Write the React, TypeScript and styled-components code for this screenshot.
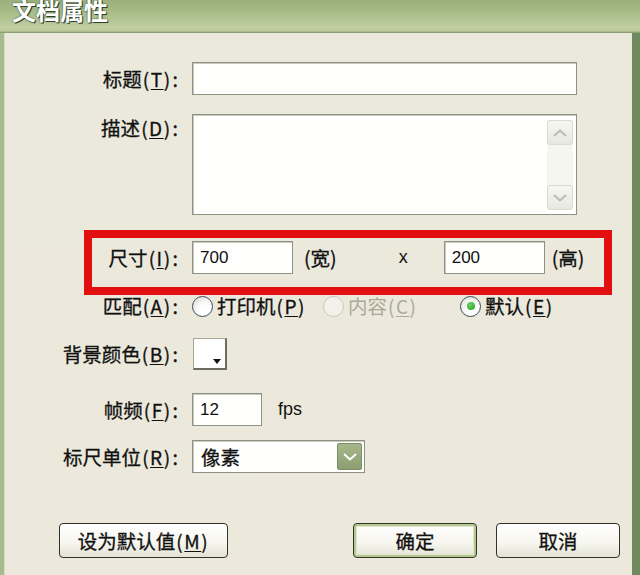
import React from "react";
import styled, { createGlobalStyle, css } from "styled-components";

const Global = createGlobalStyle`
  html, body { margin: 0; padding: 0; background: #ece9d8; }
  body { width: 640px; height: 575px; overflow: hidden; }
  *, *::before, *::after { box-sizing: border-box; }
`;

const CJK = `"Noto Sans CJK SC", "Noto Sans", sans-serif`;
const LATIN = `"Liberation Sans", "Noto Sans CJK SC", sans-serif`;

const Window = styled.div`
  width: 640px;
  height: 575px;
  display: flex;
  flex-direction: column;
  font-family: ${CJK};
  color: #111;
`;

const TitleBar = styled.div`
  height: 33px;
  flex: none;
  display: flex;
  align-items: flex-start;
  padding-left: 12px;
  background: linear-gradient(180deg, #9aaf7c 0%, #a9bd8a 40%, #c4d0a2 85%, #b9c79a 94%, #7d9264 100%);
  overflow: hidden;
`;

const TitleText = styled.div`
  margin-top: -6px;
  font-size: 24px;
  font-weight: 700;
  line-height: 32px;
  color: #ffffff;
  text-shadow: 1px 1px 0 #30402a, 0 0 2px #3a4a30;
`;

const Body = styled.div`
  flex: 1;
  display: flex;
  flex-direction: column;
  background: linear-gradient(180deg, #ebe9dc 0%, #ece9dc 100%);
  border-left: 4px solid #a8bb8c;
  border-right: 8px solid #6f8a5c;
  box-shadow: inset 1px 0 0 #d6dcc4;
  padding-top: 29px;
`;

const Row = styled.div<{ $top?: number; $align?: string }>`
  display: grid;
  grid-template-columns: 174px auto;
  column-gap: 14px;
  align-items: ${(p) => p.$align || "center"};
  margin-top: ${(p) => p.$top ?? 0}px;
  position: relative;
`;

/* the dialog's system font is a little heavier than Noto's regular cut */
const heavier = css`
  -webkit-text-stroke: 0.3px currentColor;
`;

const Label = styled.label`
  text-align: right;
  font-size: 19.5px;
  line-height: 24px;
  white-space: nowrap;
  color: #111;
  ${heavier};
`;

/* access-key hint such as (T), laid out half-width like the dialog's system font */
const Key = styled.span`
  font-size: 19px;
  letter-spacing: 1.5px;
  margin-left: 1px;
  u { text-decoration: underline; text-underline-offset: 2px; }
`;

const Colon = styled.span`
  margin-left: 1px;
`;

const fieldBorder = css`
  border: 1px solid #8d9282;
  box-shadow: inset 1px 1px 0 #c9c9c0;
  background: #fffffe;
`;

const TextField = styled.div<{ $w: number; $h?: number }>`
  ${fieldBorder};
  width: ${(p) => p.$w}px;
  height: ${(p) => p.$h ?? 33}px;
  display: flex;
  align-items: center;
  padding-left: 7px;
  font-family: ${LATIN};
  font-size: 17px;
  color: #111;
`;

const TextArea = styled.div`
  ${fieldBorder};
  width: 385px;
  height: 101px;
  display: flex;
  justify-content: flex-end;
  padding: 5px 3px 4px 0;
`;

const ScrollBar = styled.div`
  width: 26px;
  display: flex;
  flex-direction: column;
  justify-content: space-between;
  background: #f6f6f1;
  border-radius: 2px;
`;

const ScrollBtn = styled.div`
  height: 25px;
  border: 1px solid #d9dccf;
  border-radius: 3px;
  background: linear-gradient(180deg, #f7f7f2, #e7e8de);
  display: flex;
  align-items: center;
  justify-content: center;
`;

const SizeRow = styled(Row)`
  &::after {
    content: "";
    position: absolute;
    left: 80px;
    top: -11px;
    width: 528px;
    height: 65px;
    border: 8px solid #e10f0f;
    pointer-events: none;
  }
`;

const Inline = styled.div`
  display: flex;
  align-items: center;
`;

const Unit = styled.span<{ $ml: number }>`
  margin-left: ${(p) => p.$ml}px;
  font-size: 19.5px;
  line-height: 24px;
  ${heavier};
`;

const Times = styled.span<{ $ml: number; $mr: number }>`
  margin-left: ${(p) => p.$ml}px;
  margin-right: ${(p) => p.$mr}px;
  font-family: ${LATIN};
  font-size: 18px;
`;

const Option = styled.div<{ $w?: number; $disabled?: boolean }>`
  display: flex;
  align-items: center;
  width: ${(p) => (p.$w ? `${p.$w}px` : "auto")};
  font-size: 19.5px;
  line-height: 24px;
  color: ${(p) => (p.$disabled ? "#aca899" : "#111")};
  white-space: nowrap;
  ${(p) => !p.$disabled && heavier};
`;

const Radio = styled.span<{ $on?: boolean; $disabled?: boolean }>`
  width: 21px;
  height: 21px;
  border-radius: 50%;
  margin-right: 4px;
  flex: none;
  border: 1px solid ${(p) => (p.$disabled ? "#cac8bb" : "#3f4a5a")};
  background: ${(p) =>
    p.$disabled ? "#f2f1ea" : "radial-gradient(circle at 65% 70%, #ffffff 30%, #dcdcd2 100%)"};
  display: flex;
  align-items: center;
  justify-content: center;
  &::after {
    content: "";
    display: ${(p) => (p.$on ? "block" : "none")};
    width: 8px;
    height: 8px;
    border-radius: 50%;
    background: radial-gradient(circle at 40% 35%, #6fd06a, #21a121);
  }
`;

const Swatch = styled.div`
  width: 34px;
  height: 32px;
  margin-left: 1px;
  background: #fff;
  border-top: 1px solid #a7a69a;
  border-left: 1px solid #a7a69a;
  border-right: 2px solid #6d6c62;
  border-bottom: 2px solid #6d6c62;
  position: relative;
  &::after {
    content: "";
    position: absolute;
    right: 4px;
    bottom: 4px;
    border-left: 4px solid transparent;
    border-right: 4px solid transparent;
    border-top: 5px solid #111;
  }
`;

const Fps = styled.span`
  margin-left: 16px;
  font-family: ${LATIN};
  font-size: 18px;
`;

const Select = styled.div`
  ${fieldBorder};
  width: 173px;
  height: 33px;
  display: flex;
  align-items: center;
  justify-content: space-between;
  padding: 2px 2px 2px 8px;
  font-size: 19.5px;
  ${heavier};
`;

const DropBtn = styled.div`
  width: 25px;
  height: 27px;
  border-radius: 2px;
  border: 1px solid #7c8e66;
  background: linear-gradient(180deg, #a7b78b, #8c9f70);
  display: flex;
  align-items: center;
  justify-content: center;
`;

const Buttons = styled.div`
  display: flex;
  align-items: center;
  margin-top: 50px;
  padding-left: 55px;
`;

const Button = styled.button<{ $w: number; $ml?: number; $default?: boolean }>`
  width: ${(p) => p.$w}px;
  height: 35px;
  margin-left: ${(p) => p.$ml ?? 0}px;
  border: 1px solid #2f3328;
  border-radius: 4px;
  background: linear-gradient(180deg, #ffffff 0%, #f6f5ee 60%, #e4e2d4 100%);
  font-family: ${CJK};
  font-size: 19.5px;
  color: #111;
  padding: 0;
  ${heavier};
  ${(p) =>
    p.$default &&
    css`
      box-shadow: inset 0 0 0 2px #b4c98f, inset 0 0 0 3px #dfe8c8;
    `}
`;

const Chevron = ({ up, color }: { up?: boolean; color: string }) => (
  <svg width="16" height="10" viewBox="0 0 16 10">
    <path
      d={up ? "M2 8 L8 2.5 L14 8" : "M2 2 L8 7.5 L14 2"}
      fill="none"
      stroke={color}
      strokeWidth="2"
    />
  </svg>
);

const M = ({ k }: { k: string }) => (
  <Key>
    (<u>{k}</u>)
  </Key>
);

export default function App() {
  return (
    <Window>
      <Global />
      <TitleBar>
        <TitleText>文档属性</TitleText>
      </TitleBar>
      <Body>
        <Row>
          <Label>
            标题<M k="T" /><Colon>:</Colon>
          </Label>
          <TextField $w={385} />
        </Row>

        <Row $top={19} $align="start">
          <Label style={{ marginTop: 2 }}>
            描述<M k="D" /><Colon>:</Colon>
          </Label>
          <TextArea>
            <ScrollBar>
              <ScrollBtn>
                <Chevron up color="#b9bcb0" />
              </ScrollBtn>
              <ScrollBtn>
                <Chevron color="#b9bcb0" />
              </ScrollBtn>
            </ScrollBar>
          </TextArea>
        </Row>

        <SizeRow $top={26}>
          <Label>
            尺寸<M k="I" /><Colon>:</Colon>
          </Label>
          <Inline>
            <TextField $w={101}>700</TextField>
            <Unit $ml={11}>(宽)</Unit>
            <Times $ml={62} $mr={36}>x</Times>
            <TextField $w={101}>200</TextField>
            <Unit $ml={7}>(高)</Unit>
          </Inline>
        </SizeRow>

        <Row $top={20}>
          <Label>
            匹配<M k="A" /><Colon>:</Colon>
          </Label>
          <Inline>
            <Option $w={131}>
              <Radio />
              打印机<M k="P" />
            </Option>
            <Option $w={137} $disabled>
              <Radio $disabled />
              内容<M k="C" />
            </Option>
            <Option>
              <Radio $on />
              默认<M k="E" />
            </Option>
          </Inline>
        </Row>

        <Row $top={20}>
          <Label>
            背景颜色<M k="B" /><Colon>:</Colon>
          </Label>
          <Swatch />
        </Row>

        <Row $top={23}>
          <Label>
            帧频<M k="F" /><Colon>:</Colon>
          </Label>
          <Inline>
            <TextField $w={70}>12</TextField>
            <Fps>fps</Fps>
          </Inline>
        </Row>

        <Row $top={14}>
          <Label>
            标尺单位<M k="R" /><Colon>:</Colon>
          </Label>
          <Select>
            像素
            <DropBtn>
              <Chevron color="#ffffff" />
            </DropBtn>
          </Select>
        </Row>

        <Buttons>
          <Button $w={169}>
            设为默认值<M k="M" />
          </Button>
          <Button $w={124} $ml={125} $default>
            确定
          </Button>
          <Button $w={124} $ml={19}>
            取消
          </Button>
        </Buttons>
      </Body>
    </Window>
  );
}
